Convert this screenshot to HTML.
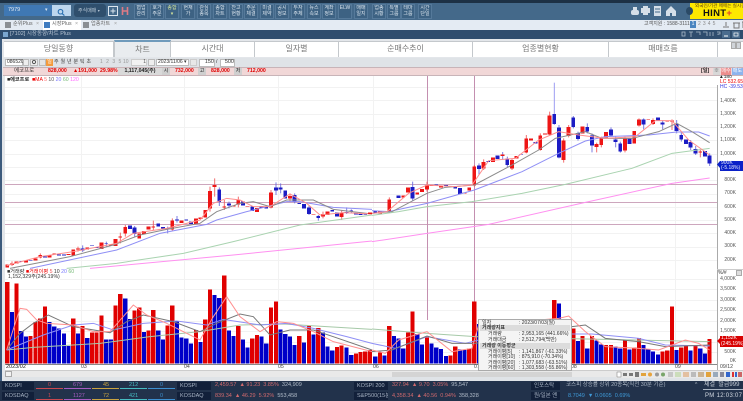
<!DOCTYPE html>
<html lang="ko"><head><meta charset="utf-8"><style>
*{box-sizing:border-box}
html,body{margin:0;padding:0;width:743px;height:401px;overflow:hidden;background:#fff;font-family:"Liberation Sans","Noto Sans CJK KR",sans-serif}
.a{position:absolute;white-space:nowrap}
.b{position:absolute;top:4px;width:14px;height:15px;background:#3d6283;border:1px solid #55799a;color:#dce6ef;font-size:5px;line-height:5.5px;text-align:center;padding-top:1px;overflow:hidden}
.t{position:absolute;top:41px;height:16px;border-right:1px solid #c4c8cc;color:#777;font-size:8px;line-height:16px;text-align:center}
.y{position:absolute;left:712px;width:24px;font-size:5px;line-height:6px;text-align:right;color:#555}
.g{position:absolute;font-size:5.2px;line-height:7px;color:#555;white-space:nowrap}
.k{position:absolute;height:8px;background:#12203a;color:#a8b4c4;font-size:5.5px;line-height:8px;padding-left:3px;white-space:nowrap}
.v{position:absolute;font-size:5.5px;line-height:8px;white-space:nowrap}
</style></head><body>
<div style="position:relative;width:743px;height:401px;overflow:hidden;filter:blur(.3px)">
<div class="a" style="left:0;top:0;width:743px;height:3px;background:#1d3145"></div>
<div class="a" style="left:0;top:3px;width:743px;height:17px;background:#44698a"></div>
<div class="a" style="left:4px;top:5px;width:48px;height:11px;background:#3f78b4;color:#e6eef6;font-size:5.5px;line-height:11px;padding-left:4px">7979<span class="a" style="left:41px;color:#dbe8f4;font-size:5px">▾</span></div>
<div class="a" style="left:52px;top:5px;width:19px;height:11px;background:#bcd6ee"><svg width="19" height="11"><circle cx="8.5" cy="4.7" r="2.3" fill="none" stroke="#2a6fb0" stroke-width="1.1"/><path d="M10 6.4l2.4 2.2" stroke="#2a6fb0" stroke-width="1.2"/></svg></div>
<div class="a" style="left:74px;top:4px;width:32px;height:13px;background:#2f4f6d;border-radius:3px;color:#b9c8d6;font-size:5px;line-height:13px;padding-left:4px">주식매매 <span style="font-size:4px">▾</span></div>
<svg class="a" style="left:108px;top:5px" width="24" height="12"><rect x=".5" y="1.5" width="9" height="9" fill="#44698a" stroke="#dbe5ee"/><path d="M2.5 6h5M5 3.5v5" stroke="#dbe5ee"/><path d="M14.5 2v8M19.5 2v8M14.5 6h5" stroke="#e07a85" stroke-width="1.6"/></svg>
<div class="b" style="left:134px">협업<br>관리</div><div class="b" style="left:150px">호가<br>주문</div><div class="b" style="left:165px;color:#d8e79c">종합<br>▾</div><div class="b" style="left:181px">현재<br>가</div><div class="b" style="left:197px">관심<br>종목</div><div class="b" style="left:213px">종합<br>차트</div><div class="b" style="left:229px">잔고<br>현황</div><div class="b" style="left:244px">주문<br>체결</div><div class="b" style="left:260px">미결<br>제약</div><div class="b" style="left:275px">공시<br>정보</div><div class="b" style="left:291px">투자<br>주체</div><div class="b" style="left:307px">뉴스<br>속보</div><div class="b" style="left:322px">계좌<br>정보</div><div class="b" style="left:338px">ELW<br>&nbsp;</div><div class="b" style="left:354px">매매<br>일지</div><div class="b" style="left:372px">업종<br>시황</div><div class="b" style="left:387px">특별<br>그룹</div><div class="b" style="left:401px">테마<br>그룹</div><div class="b" style="left:418px">시간<br>단일</div>
<svg class="a" style="left:630px;top:5px" width="56" height="12"><g fill="#d5dfe8"><rect x="1" y="5" width="8" height="5" rx="2"/><rect x="3" y="2" width="4" height="3"/><rect x="11" y="3" width="9" height="5"/><rect x="13" y="1" width="5" height="9"/><rect x="24" y="1" width="7" height="10"/><path d="M36 6l5-5 5 5v5h-10z"/></g><path d="M25 4h5M25 7h5" stroke="#44698a"/><path d="M40 8h2v3h-2z" fill="#44698a"/></svg>
<div class="a" style="left:690px;top:3px;width:53px;height:16px;background:#fde800"></div>
<div class="a" style="left:686px;top:7px;width:7px;height:8px;border-radius:50%;background:#2b4a66"></div>
<div class="a" style="left:695px;top:3px;font-size:4.6px;line-height:6px;color:#5a3a10">외국인/기관 매매는 실시간</div>
<div class="a" style="left:703px;top:9px;font-size:9.5px;line-height:10px;font-weight:bold;color:#111;letter-spacing:.3px">HINT<span style="color:#e2442a">+</span></div>

<div class="a" style="left:0;top:20px;width:743px;height:10px;background:#e4ebf3"></div>
<div class="a" style="left:43px;top:20px;width:38px;height:10px;background:#fff"></div>
<div class="a" style="left:5px;top:22px;width:6px;height:6px;background:#8a8f94"></div><div class="g" style="left:13px;top:21px;color:#666">순위Plus</div><div class="g" style="left:36px;top:21px;color:#999">×</div>
<div class="a" style="left:44px;top:22px;width:6px;height:6px;background:#3f7cc0"></div><div class="g" style="left:52px;top:21px;color:#666">시장Plus</div><div class="g" style="left:75px;top:21px;color:#999">×</div>
<div class="a" style="left:83px;top:22px;width:6px;height:6px;background:#8a8f94"></div><div class="g" style="left:91px;top:21px;color:#666">업종차트</div><div class="g" style="left:114px;top:21px;color:#999">×</div>
<div class="g" style="left:644px;top:21px;color:#555;font-size:5px">고객지원 : 1588-3111</div>
<div class="a" style="left:690px;top:21px;width:6px;height:7px;background:#4a85c0;color:#fff;font-size:5px;line-height:7px;text-align:center">1</div>
<div class="g" style="left:698px;top:21px;font-size:5px;letter-spacing:2.1px;color:#888">2345</div>
<svg class="a" style="left:722px;top:21px" width="21" height="8"><path d="M1 6h6M4 1v4M12 2h5v5h-5zM11 2h7M20 1h1v6" stroke="#777" fill="none"/></svg>

<div class="a" style="left:0;top:30px;width:743px;height:9px;background:#2f4d6e"></div>
<div class="a" style="left:3px;top:32px;width:5px;height:5px;background:#7aa6cf"></div>
<div class="g" style="left:10px;top:30.5px;color:#b6c3d2;font-size:5.5px">[7102] 시장동향/차트 Plus</div>
<svg class="a" style="left:680px;top:30px" width="63" height="9"><g stroke="#a9b9ca" fill="none" stroke-width=".8"><rect x="2" y="2" width="3" height="4"/><path d="M9 2h4M11 2v5M16 2h4v3M23 2h4v4M30 2v4M33 2v4M37 2h3v2h-2v1"/></g><rect x="42" y="1" width="8" height="7" fill="#4a6c8e"/><path d="M44 6h4" stroke="#fff"/><rect x="52" y="1" width="8" height="7" fill="#4a6c8e"/><rect x="54" y="3" width="4" height="3" fill="none" stroke="#fff" stroke-width=".7"/></svg>

<div class="a" style="left:0;top:39px;width:743px;height:342px;background:#e3e6ea"></div>
<div class="a" style="left:0;top:39px;width:2px;height:342px;background:#3c5a7c"></div>
<div class="a" style="left:4px;top:41px;width:739px;height:16px;background:#fff;border-top:1px solid #c4c8cc"></div>
<div class="t" style="left:4px;width:110px">당일동향</div>
<div class="t" style="left:114px;top:40px;height:17px;width:57px;background:#e9ecef;border-top:2px solid #6f9abb;border-left:1px solid #c4c8cc;line-height:16px">차트</div>
<div class="t" style="left:171px;width:84px">시간대</div>
<div class="t" style="left:255px;width:84px">일자별</div>
<div class="t" style="left:339px;width:134px">순매수추이</div>
<div class="t" style="left:473px;width:136px">업종별현황</div>
<div class="t" style="left:609px;width:109px">매매흐름</div>
<div class="a" style="left:731px;top:42px;width:5px;height:7px;background:#d0d4d9;border:1px solid #aaa"></div><div class="a" style="left:736px;top:42px;width:5px;height:7px;background:#d0d4d9;border:1px solid #aaa"></div>

<div class="a" style="left:3px;top:58px;width:740px;height:9px;background:#dfe3e7"></div>
<div class="a" style="left:5px;top:59px;width:18px;height:7px;background:#fff;border:1px solid #bbb;font-size:5px;line-height:5px;color:#333;padding-left:1px">086520</div>
<svg class="a" style="left:23px;top:59px" width="23" height="7"><rect x=".5" y=".5" width="5" height="6" fill="#eee" stroke="#bbb"/><rect x="7.5" y=".5" width="7" height="6" fill="#eee" stroke="#bbb"/><circle cx="11" cy="3" r="1.6" fill="none" stroke="#555"/><rect x="16.5" y=".5" width="6" height="6" fill="#e4e4e4" stroke="#bbb"/></svg>
<div class="a" style="left:46px;top:59px;width:7px;height:7px;background:#f39a3c;color:#fff;font-size:5px;line-height:7px;text-align:center">일</div>
<div class="g" style="left:54px;top:59px;font-size:5px;letter-spacing:1.9px;color:#444">주월년분틱초</div>
<div class="g" style="left:100px;top:59px;font-size:5px;letter-spacing:3.4px;color:#999">1235</div>
<div class="g" style="left:123px;top:59px;font-size:5px;color:#999">10</div>
<div class="a" style="left:131px;top:59px;width:16px;height:7px;background:#f2f2f2;border:1px solid #ccc;font-size:5px;line-height:5px;text-align:right;color:#555">1</div>
<div class="a" style="left:148px;top:59px;width:7px;height:7px;background:#eee;border:1px solid #bbb"></div>
<div class="a" style="left:156px;top:59px;width:33px;height:7px;background:#fff;border:1px solid #bbb;font-size:5px;line-height:5px;color:#333;padding-left:1px">2023/11/06 ▾</div>
<div class="a" style="left:190px;top:59px;width:7px;height:7px;background:#e8e8e8;border:1px solid #ccc"></div>
<div class="a" style="left:199px;top:59px;width:16px;height:7.5px;background:#fff;border:1px solid #bbb;font-size:5.5px;line-height:5.5px;text-align:right;color:#333">150</div>
<div class="g" style="left:216px;top:59px;color:#333">/</div>
<div class="a" style="left:220px;top:59px;width:15px;height:7.5px;background:#fff;border:1px solid #bbb;font-size:5.5px;line-height:5.5px;text-align:right;color:#333">500</div>

<div class="a" style="left:3px;top:67px;width:740px;height:9px;background:#f1d7d7;border-top:1px solid #c8b4b8;border-bottom:1px solid #c8b4b8"></div>
<div class="g" style="left:14px;top:67.5px;color:#333;font-size:5.5px">에코프로</div>
<div class="g" style="left:48px;top:67.5px;color:#e00000;font-weight:bold">828,000</div>
<div class="g" style="left:73px;top:67.5px;color:#e00000;font-weight:bold">▲191,000</div>
<div class="g" style="left:100px;top:67.5px;color:#e00000;font-weight:bold">29.98%</div>
<div class="a" style="left:118px;top:68px;width:44px;height:7px;background:#d9d9d9;color:#222;font-size:5.2px;line-height:7px;text-align:center;font-weight:bold">1,117,045(주)</div>
<div class="a" style="left:162px;top:68px;width:8px;height:7px;background:#cfcfcf;color:#222;font-size:5px;line-height:7px;text-align:center">시</div>
<div class="g" style="left:175px;top:67.5px;color:#e00000;font-weight:bold">732,000</div>
<div class="a" style="left:198px;top:68px;width:8px;height:7px;background:#cfcfcf;color:#222;font-size:5px;line-height:7px;text-align:center">고</div>
<div class="g" style="left:211px;top:67.5px;color:#e00000;font-weight:bold">828,000</div>
<div class="a" style="left:234px;top:68px;width:8px;height:7px;background:#cfcfcf;color:#222;font-size:5px;line-height:7px;text-align:center">저</div>
<div class="g" style="left:247px;top:67.5px;color:#e00000;font-weight:bold">712,000</div>
<div class="g" style="left:701px;top:67.5px;color:#222;font-weight:bold">[일]</div>
<div class="a" style="left:713px;top:68px;width:7px;height:7px;background:#d8d8d8;color:#555;font-size:5px;line-height:7px;text-align:center">※</div>
<div class="a" style="left:721px;top:68px;width:10px;height:7px;background:#ed8d8d;color:#fff;font-size:5px;line-height:7px;text-align:center">매수</div>
<div class="a" style="left:732px;top:68px;width:11px;height:7px;background:#8db4ed;color:#fff;font-size:5px;line-height:7px;text-align:center">매도</div>

<div class="a" style="left:5px;top:76px;width:738px;height:294px;background:#fff"></div>
<svg class="a" style="left:0;top:0" width="743" height="401">
<defs><clipPath id="c"><rect x="5" y="76" width="712" height="294"/></clipPath></defs>
<g stroke="#f2f2f2" fill="none">
<path d="M5 87.5H717M5 100.5H717M5 114.5H717M5 127.5H717M5 140.5H717M5 154.5H717M5 167.5H717M5 180.5H717M5 194.5H717M5 207.5H717M5 220.5H717M5 233.5H717M5 247.5H717M5 260.5H717M5 279.5H717M5 289.5H717M5 300.5H717M5 310.5H717M5 321.5H717M5 331.5H717M5 342.5H717M5 352.5H717"/>
<path d="M81.5 76V364M184.5 76V364M278.5 76V364M373.5 76V364M571.5 76V364M675.5 76V364"/>
</g>
<path d="M5 184.5H717M5 202.5H717M5 224.5H717" stroke="#cda6bd" stroke-width="1"/>
<path d="M427.5 76V320M474.5 76V320" stroke="#c48fb0" stroke-width="1"/>
<path d="M717.5 76V370" stroke="#aaa"/>
<path d="M5 364.5H717" stroke="#888"/>
<g clip-path="url(#c)">
<!-- price left -->
<g transform="translate(0,100) scale(.33333)" fill="none">
<g stroke-width="3" stroke-opacity=".85">
<path stroke="#f05555" d="M36 484V498M121 460V475M234 440V455M361 398V430M376 375V410M460 362V390M517 355V392M630 260V335M644 235V290M673 300V330M715 290V322M813 270V325M870 280V305M969 335V355M1025 330V360"/>
<path stroke="#6666dd" d="M248 436V456M319 425V440M404 378V410M503 380V400M531 348V368M658 262V318M687 305V325M828 247V285M842 250V280M884 280V310M927 318V345M955 345V362M1040 322V342M1054 328V340"/>
</g>
<path shape-rendering="crispEdges" stroke="#ee1515" stroke-width="11.5" d="M22 494V502M36 490V495M50 484V491M78 482V488M107 475V481M121 465V473M149 466V473M163 461V464M206 462V465M220 449V466M234 445V449M262 442V448M305 428V447M333 433V437M347 417V438M361 410V413M376 381V400M418 400V415M432 393V402M446 380V388M460 380V382M517 362V388M545 362V369M588 355V372M602 352V357M616 330V352M630 273V326M644 255V261M673 319V322M701 316V320M715 299V313M743 318V320M771 324V336M813 278V322M870 288V296M941 343V345M969 342V349M983 335V345M1025 337V351M1110 338V342"/>
<path shape-rendering="crispEdges" stroke="#1c1cc4" stroke-width="11.5" d="M64 483V485M92 480V482M135 469V473M177 463V466M192 463V466M248 446V452M276 436V438M290 441V444M319 429V431M390 376V387M404 383V402M475 370V380M489 381V386M503 384V388M531 358V362M559 358V362M573 364V372M658 268V306M687 311V317M729 304V316M757 320V333M785 318V324M799 320V325M828 262V271M842 262V269M856 272V295M884 285V305M898 309V312M912 312V325M927 322V342M955 348V354M997 330V335M1011 338V349M1040 336V338M1054 331V335M1068 339V343M1082 342V345M1096 343V345"/>
<g stroke-width="3">
<polyline stroke="#a9d3b0" points="200,505 350,490 550,460 700,425 900,375 1116,345"/>
<polyline stroke="#ff90f0" points="270,505 700,465 1116,423"/>
<polyline stroke="#8f8ff5" points="90,505 350,450 480,400 620,373 650,360 740,335 860,305 900,305 1000,322 1116,328"/>
<polyline stroke="#8b8b8b" points="30,505 210,470 340,435 420,405 500,388 600,370 650,335 720,310 760,305 810,320 860,300 940,300 1000,328 1116,342"/>
<polyline stroke="#ff8f8f" points="20,497 120,470 220,455 350,430 400,400 500,385 600,360 640,310 680,295 720,300 760,320 810,320 870,282 920,310 960,345 1030,338 1116,342"/>
</g>
</g>
<!-- price right -->
<g transform="translate(372,70) scale(.33333)" fill="none">
<g stroke-width="3" stroke-opacity=".85">
<path stroke="#8c8cf0" d="M547 38V165"/>
<path stroke="#6666dd" d="M122 335V392M321 280V315M604 138V175M618 185V212M646 160V190M660 190V247M717 172V200M731 200V232M745 215V248M815 145V178M872 150V178M914 150V190M928 185V215M956 210V240M971 228V255M1013 250V288M561 165V265M392 246V270M406 260V292"/>
<path stroke="#f05555" d="M52 382V428M165 335V365M307 285V350M335 268V300M420 265V300M463 195V250M505 190V242M533 125V197M575 205V278M590 165V202M674 218V247M688 200V232M759 200V247M801 145V170M843 145V165M900 148V180M985 240V262"/>
</g>
<path shape-rendering="crispEdges" stroke="#ee1515" stroke-width="11.5" d="M-6 428V432M24 425V430M52 388V425M94 376V382M108 352V368M136 368V374M150 357V366M165 345V358M179 345V348M207 347V352M278 368V371M292 352V362M307 290V346M335 276V296M363 262V276M392 254V258M420 270V296M434 258V266M463 206V247M477 206V212M505 196V240M519 190V194M533 136V194M575 212V270M590 171V198M632 170V190M674 222V231M688 203V225M702 186V202M759 206V241M787 183V220M801 148V167M829 148V150M843 150V162M886 152V154M900 152V155M985 245V248"/>
<path shape-rendering="crispEdges" stroke="#1c1cc4" stroke-width="11.5" d="M10 422V430M38 424V428M80 376V384M122 351V385M193 343V346M222 345V350M250 350V356M264 354V372M321 286V297M349 273V276M377 256V267M406 266V285M448 252V254M491 216V220M547 132V162M561 173V262M604 143V171M618 189V207M646 171V184M660 196V227M717 178V197M731 209V216M745 220V244M773 206V222M815 148V164M858 143V152M872 157V164M914 160V183M928 195V209M942 209V222M956 216V233M971 237V250M999 243V260M1013 256V281"/>
<g stroke-width="3">
<polyline stroke="#a9d3b0" points="0,436 80,425 165,410 300,395 450,370 580,343 780,295 900,250 1013,235"/>
<polyline stroke="#ff90f0" points="0,515 165,490 350,463 640,397 900,340 1013,324"/>
<polyline stroke="#8f8ff5" points="0,422 50,425 165,400 307,360 450,305 560,250 640,213 700,200 830,195 914,186 980,186 1013,198"/>
<polyline stroke="#8b8b8b" points="0,430 60,425 165,370 220,352 307,345 420,285 500,240 550,205 640,185 690,205 780,205 860,185 914,160 960,185 1013,218"/>
<polyline stroke="#ff8f8f" points="0,430 45,425 110,370 165,345 250,350 300,345 350,272 430,265 500,210 560,185 620,195 700,205 790,200 850,152 900,152 950,210 1013,255"/>
</g>
</g>
<!-- volume left -->
<g transform="translate(0,260) scale(.33333)" fill="none">
<path shape-rendering="crispEdges" stroke="#e00000" stroke-width="12.5" d="M22 66V311M50 70V311M92 228V311M107 186V311M121 176V311M135 140V311M220 176V311M248 198V311M276 218V311M290 218V311M305 166V311M347 136V311M361 102V311M404 152V311M418 143V311M446 211V311M460 150V311M503 197V311M517 137V311M588 210V311M616 178V311M630 88V311M673 46V311M715 198V311M757 236V311M771 225V311M813 142V311M828 124V311M898 228V311M927 197V311M955 204V311M1011 261V311M1025 257V311M1068 281V311M1082 276V311M1096 275V311M1110 270V311"/>
<path shape-rendering="crispEdges" stroke="#0000c8" stroke-width="12.5" d="M36 156V311M64 213V311M78 230V311M149 186V311M163 200V311M177 205V311M192 220V311M206 258V311M234 221V311M262 234V311M319 238V311M333 238V311M376 115V311M390 177V311M432 216V311M475 212V311M489 239V311M531 185V311M545 232V311M559 235V311M573 250V311M602 246V311M644 105V311M658 114V311M687 211V311M701 228V311M729 238V311M743 262V311M785 230V311M799 250V311M842 208V311M856 222V311M870 230V311M884 255V311M912 248V311M941 224V311M969 218V311M983 259V311M997 272V311M1040 263V311M1054 285V311"/>
<g stroke-width="3">
<polyline stroke="#a6c9a8" points="20,270 100,262 300,250 450,230 600,215 720,195 850,192 1116,208"/>
<polyline stroke="#8f8ff5" points="20,270 130,225 220,195 280,190 340,210 430,190 530,183 620,195 670,178 780,195 860,190 940,205 1040,230 1116,250"/>
<polyline stroke="#777" points="20,270 60,220 100,190 145,165 220,200 330,218 380,185 430,165 520,185 600,215 650,190 720,162 760,170 810,225 870,210 940,210 1000,230 1116,270"/>
<polyline stroke="#ff8f8f" points="20,270 60,145 80,148 110,180 140,190 220,195 280,215 330,215 400,135 440,165 500,190 560,220 600,240 640,170 680,110 720,170 780,215 830,185 880,190 940,215 1000,245 1116,275"/>
</g>
</g>
<!-- volume right -->
<g transform="translate(372,260) scale(.33333)" fill="none">
<path shape-rendering="crispEdges" stroke="#e00000" stroke-width="12.5" d="M24 278V311M52 198V311M108 218V311M122 154V311M165 233V311M236 286V311M250 260V311M292 266V311M307 124V311M547 120V311M575 180V311M604 205V311M632 228V311M660 228V311M702 255V311M717 255V311M759 238V311M787 262V311M801 234V311M872 275V311M886 272V311M900 140V311M928 263V311M942 257V311M971 258V311M1013 237V311"/>
<path shape-rendering="crispEdges" stroke="#0000c8" stroke-width="12.5" d="M10 290V311M38 287V311M66 228V311M80 235V311M94 265V311M136 222V311M150 253V311M179 250V311M193 262V311M207 267V311M222 288V311M264 268V311M278 270V311M321 192V311M561 130V311M590 200V311M618 243V311M646 265V311M674 242V311M688 254V311M731 260V311M745 265V311M773 269V311M815 255V311M829 267V311M843 274V311M858 283V311M914 270V311M956 272V311M985 266V311M999 281V311"/>
<g stroke-width="3">
<polyline stroke="#a6c9a8" points="0,207 165,220 310,230 700,238 1013,245"/>
<polyline stroke="#8f8ff5" points="0,250 70,265 165,230 280,250 320,240 600,222 660,222 800,235 880,255 1013,258"/>
<polyline stroke="#777" points="0,275 60,270 165,228 240,250 310,250 600,200 640,195 700,235 800,245 880,260 1013,255"/>
<polyline stroke="#ff8f8f" points="0,270 40,280 80,240 130,225 165,215 240,275 300,265 320,195 560,175 590,168 640,215 700,260 800,265 860,270 940,240 980,250 1013,270"/>
</g>
</g>
</g>
<path d="M720 161l-3 3.5 3 3.5z" fill="#0a20c8"/><path d="M720 338l-3 3 3 3z" fill="#d80000"/>
</svg>

<div class="g" style="left:7px;top:76.5px;color:#222;font-weight:bold">■에코프로</div>
<div class="g" style="left:32px;top:76.5px;color:#e00">■MA <span style="color:#f66">5</span> <span style="color:#555">10</span> <span style="color:#77f">20</span> <span style="color:#7b7">60</span> <span style="color:#f6f">120</span></div>
<div class="g" style="left:7px;top:268.5px;color:#333;background:#fff">■거래량 <span style="color:#e00">■거래이평</span> <span style="color:#e55">5</span> 10 <span style="color:#77f">20</span> <span style="color:#7b7">60</span></div>
<div class="g" style="left:8px;top:273.5px;color:#333;background:#fff">1,152,329주(245.19%)</div>

<div class="a" style="left:717px;top:76px;width:26px;height:9px;background:#fff"></div>
<div class="g" style="left:719px;top:73.5px;font-size:4.8px;color:#222">▲180</div>
<div class="g" style="left:720px;top:80px;font-size:5px;line-height:5px;color:#e00">LC 532.65%</div>
<div class="g" style="left:720px;top:85px;font-size:5px;line-height:5px;color:#33d">HC -39.53%</div>
<div class="y" style="top:98px">1,400K</div><div class="y" style="top:111px">1,300K</div><div class="y" style="top:124px">1,200K</div><div class="y" style="top:137px">1,100K</div><div class="y" style="top:151px">1,000K</div><div class="y" style="top:177px">800K</div><div class="y" style="top:190px">700K</div><div class="y" style="top:204px">600K</div><div class="y" style="top:217px">500K</div><div class="y" style="top:230px">400K</div><div class="y" style="top:243px">300K</div><div class="y" style="top:257px">200K</div>
<div class="a" style="left:720px;top:161px;width:23px;height:10px;background:#0a20c8;color:#e8ecff;font-size:5px;line-height:5px;padding-left:1px">900K<br>(-5.18%)</div>
<div class="a" style="left:717px;top:269px;width:26px;height:1px;background:#ccc"></div>
<div class="g" style="left:718px;top:269.5px;font-size:5px;color:#333">%/#<span class="a" style="left:18px;top:0;width:6px;height:6px;background:#ddd;border:1px solid #aaa"></span></div>
<div class="y" style="top:276px">4,000K</div><div class="y" style="top:286px">3,500K</div><div class="y" style="top:297px">3,000K</div><div class="y" style="top:307px">2,500K</div><div class="y" style="top:318px">2,000K</div><div class="y" style="top:328px">1,500K</div><div class="y" style="top:349px">500K</div><div class="y" style="top:358px">0K</div>
<div class="a" style="left:720px;top:336px;width:23px;height:11px;background:#d80000;color:#fff;font-size:5px;line-height:5.5px;padding-left:1px">1,152K<br>(245.19%)</div>

<div class="g" style="left:6px;top:363.5px;font-size:5.5px;color:#222">2023/02</div><div class="g" style="left:81px;top:363.5px;color:#444">03</div><div class="g" style="left:184px;top:363.5px;color:#444">04</div><div class="g" style="left:278px;top:363.5px;color:#444">05</div><div class="g" style="left:373px;top:363.5px;color:#444">06</div><div class="g" style="left:474px;top:363.5px;color:#444">07</div><div class="g" style="left:571px;top:363.5px;color:#444">08</div><div class="g" style="left:675px;top:363.5px;color:#444">09</div><div class="g" style="left:720px;top:363.5px;color:#444">09/12</div>
<div class="a" style="left:5px;top:370px;width:738px;height:7px;background:#e9e9e9;border-top:1px solid #ccc"></div>
<div class="a" style="left:5px;top:371px;width:7px;height:6px;background:#f3f3f3;border:1px solid #aaa"></div>
<div class="a" style="left:392px;top:371.5px;width:180px;height:5px;background:#d4d4d4"></div>
<div class="a" style="left:5px;top:377px;width:738px;height:4px;background:#dfe3e7"></div>
<svg class="a" style="left:616px;top:371px" width="127" height="7"><rect width="127" height="7" fill="#e9e9e9"/><g fill="#777"><rect x="1" y="1" width="4" height="5" fill="#fff" stroke="#777" stroke-width=".5"/><rect x="7" y="2" width="4" height="3"/><rect x="13" y="2" width="4" height="3"/><rect x="19" y="1" width="4" height="5"/></g><rect x="25" y="2" width="5" height="3" fill="#e2a33c"/><circle cx="34" cy="3.5" r="2" fill="#e8a33c"/><circle cx="41" cy="3.5" r="2" fill="#999"/><circle cx="47" cy="3.5" r="2" fill="#79a56a"/><rect x="52" y="1" width="5" height="5" fill="#c7c7c7"/><rect x="59" y="1" width="6" height="5" fill="#cdb"/><rect x="67" y="1" width="6" height="5" fill="#e3c0a0"/><rect x="75" y="1" width="5" height="5" fill="#bbb"/><rect x="82" y="1" width="6" height="5" fill="#cbb494"/><rect x="90" y="1" width="5" height="5" fill="#e2a33c"/><rect x="97" y="1" width="5" height="5" fill="#9ab"/><rect x="104" y="1" width="4" height="5" fill="#889"/><rect x="110" y="1" width="4" height="5" fill="#36c"/><rect x="116" y="1" width="2" height="5" fill="#d33"/><rect x="119" y="1" width="2" height="5" fill="#36c"/><rect x="122" y="1" width="4" height="5" fill="#c66"/></svg>

<!-- tooltip -->
<div class="a" style="left:478px;top:319px;width:94px;height:52px;background:#f4f4f4;border:1px solid #aaa;font-size:5px;line-height:6px;color:#333">
<div class="a" style="left:3px;top:0">일자</div><div class="a" style="left:40px;top:0">: 2023/07/03(월)</div>
<div class="a" style="left:1px;top:5px;width:90px;height:6px;background:#dcdcdc;padding-left:2px;font-weight:bold">거래량지표</div>
<div class="a" style="left:9px;top:11px">거래량</div><div class="a" style="left:40px;top:11px">: 2,953,165 (441.66%)</div>
<div class="a" style="left:9px;top:17px">거래대금</div><div class="a" style="left:40px;top:17px">: 2,512,794(백만)</div>
<div class="a" style="left:1px;top:23px;width:90px;height:6px;background:#dcdcdc;padding-left:2px;font-weight:bold">거래량 이동평균</div>
<div class="a" style="left:9px;top:28.5px">거래이평[5]</div><div class="a" style="left:40px;top:28.5px">: 1,141,867 (-61.33%)</div>
<div class="a" style="left:9px;top:34px">거래이평[10]</div><div class="a" style="left:40px;top:34px">: 875,910 (-70.34%)</div>
<div class="a" style="left:9px;top:39.5px">거래이평[20]</div><div class="a" style="left:40px;top:39.5px">: 1,077,683 (-63.51%)</div>
<div class="a" style="left:9px;top:45px">거래이평[60]</div><div class="a" style="left:40px;top:45px">: 1,303,558 (-55.86%)</div>
</div>

<!-- bottom -->
<div class="a" style="left:0;top:381px;width:743px;height:20px;background:#22324b"></div>
<div class="k" style="left:2px;top:381.5px;width:32px">KOSPI</div><div class="k" style="left:2px;top:392px;width:32px">KOSDAQ</div>
<svg class="a" style="left:0;top:381px" width="180" height="20"><path d="M36 7.5h27M36 18.5h27" stroke="#c9484f"/><path d="M64 7.5h27M64 18.5h27" stroke="#a65cc2"/><path d="M92 7.5h27M92 18.5h27" stroke="#c9a341"/><path d="M120 7.5h27M120 18.5h27" stroke="#46bcc2"/><path d="M148 7.5h27M148 18.5h27" stroke="#3d8fd0"/></svg>
<div class="v" style="left:48px;top:381px;color:#c9484f">0</div><div class="v" style="left:73px;top:381px;color:#a65cc2">679</div><div class="v" style="left:103px;top:381px;color:#c9a341">45</div><div class="v" style="left:129px;top:381px;color:#46bcc2">212</div><div class="v" style="left:160px;top:381px;color:#3d8fd0">0</div>
<div class="v" style="left:48px;top:392px;color:#c9484f">1</div><div class="v" style="left:73px;top:392px;color:#a65cc2">1127</div><div class="v" style="left:103px;top:392px;color:#c9a341">72</div><div class="v" style="left:129px;top:392px;color:#46bcc2">421</div><div class="v" style="left:160px;top:392px;color:#3d8fd0">0</div>
<div class="k" style="left:177px;top:381.5px;width:34px">KOSPI</div><div class="k" style="left:177px;top:392px;width:34px">KOSDAQ</div>
<div class="v" style="left:215px;top:381px;color:#d16a6e">2,459.57 &nbsp;▲ 91.23 &nbsp;3.85% &nbsp;<span style="color:#b3bdca">324,909</span></div>
<div class="v" style="left:215px;top:392px;color:#d16a6e">839.34 &nbsp;▲ 46.29 &nbsp;5.92% &nbsp;<span style="color:#b3bdca">553,458</span></div>
<div class="k" style="left:354px;top:381.5px;width:34px">KOSPI 200</div><div class="k" style="left:354px;top:392px;width:34px;overflow:hidden">S&amp;P500(15분)</div>
<div class="v" style="left:392px;top:381px;color:#d16a6e">327.94 &nbsp;▲ 9.70 &nbsp;3.05% &nbsp;<span style="color:#b3bdca">95,547</span></div>
<div class="v" style="left:392px;top:392px;color:#d16a6e">4,358.34 &nbsp;▲ 40.56 &nbsp;0.94% &nbsp;<span style="color:#b3bdca">358,328</span></div>
<div class="k" style="left:531px;top:381.5px;width:29px;padding-left:3px">인포스탁</div><div class="k" style="left:531px;top:392px;width:29px;padding-left:3px">원/일본 엔</div>
<div class="v" style="left:566px;top:381px;color:#aab5c3">코스피 상승률 상위 20종목(직전 30분 기준)</div>
<div class="v" style="left:568px;top:392px;color:#3f9ad8">8.7049 &nbsp;▼ 0.0605 &nbsp;0.69%</div>
<div class="v" style="left:695px;top:381px;color:#b3bdca;font-size:5px">^</div>
<div class="v" style="left:704px;top:381px;color:#c4ccd6;font-size:6px">체결 &nbsp;발급999</div>
<div class="a" style="left:703px;top:388.5px;width:40px;height:1px;background:#aab5c3"></div>
<div class="v" style="left:705px;top:392px;color:#d4dae2;font-size:6px;letter-spacing:.3px">PM 12:03:07</div>
</div>
</body></html>
